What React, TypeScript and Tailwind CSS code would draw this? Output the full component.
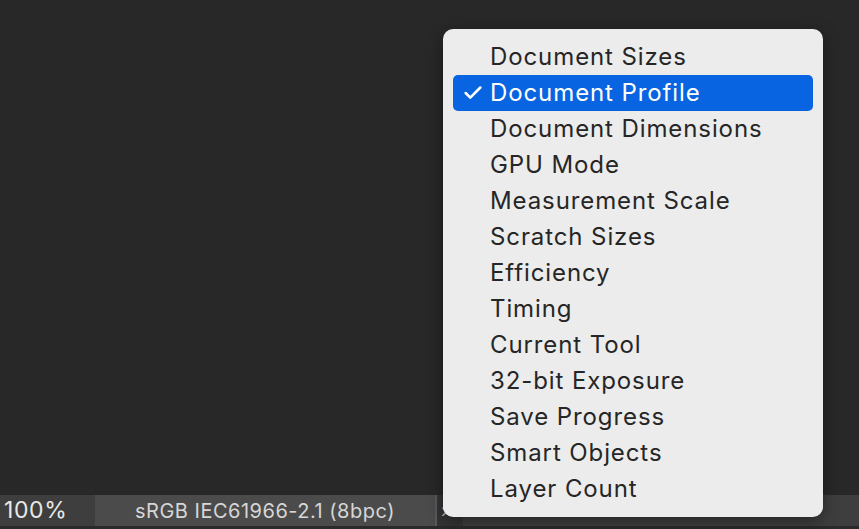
import { Check } from 'lucide-react';

const items = [
  'Document Sizes',
  'Document Profile',
  'Document Dimensions',
  'GPU Mode',
  'Measurement Scale',
  'Scratch Sizes',
  'Efficiency',
  'Timing',
  'Current Tool',
  '32-bit Exposure',
  'Save Progress',
  'Smart Objects',
  'Layer Count',
];

export default function App() {
  return (
    <div
      className="relative w-[859px] h-[529px] bg-[#282828] overflow-hidden flex flex-col"
      style={{ fontFamily: 'Inter, "Helvetica Neue", Arial, sans-serif' }}
    >
      <div className="flex-1" />
      {/* status bar */}
      <div className="h-[31px] bg-[#3e3e3e] flex items-stretch">
        <div className="w-[95px] pl-[4px] flex items-center text-[23px] tracking-[0.6px] text-[#e8e8e8]">100%</div>
        <div className="w-[340px] bg-[#4b4b4b] flex items-center justify-center text-[20px] tracking-[0.5px] text-[#d6d6d6]">
          sRGB IEC61966-2.1 (8bpc)
        </div>
        <div className="w-[2px] bg-[#5a5a5a]" />
        <div className="w-[26px] bg-[#343434] flex items-end pl-[4px] pb-[2px] text-[18px] text-[#bbbbbb]">›</div>
        <div className="flex-1" />
      </div>
      <div className="h-[3px] bg-[#2a2a2a]" />

      {/* dropdown menu */}
      <div className="absolute left-[443px] top-[29px] w-[380px] h-[488px] rounded-[10px] bg-[#ececec] shadow-[0_4px_16px_rgba(0,0,0,0.4)] pt-[10px] pb-[8px] px-[10px]">
        {items.map((label, i) => {
          const selected = i === 1;
          return (
            <div
              key={label}
              className={`h-[36px] flex items-center rounded-[5px] ${selected ? 'bg-[#0864e0] text-white' : 'text-[#262626]'}`}
            >
              <div className="w-[37px] flex items-center justify-center pl-[2px]">
                {selected && <Check className="w-[22px] h-[22px]" strokeWidth={2.8} />}
              </div>
              <span className="text-[24px] tracking-[0.9px]">{label}</span>
            </div>
          );
        })}
      </div>
    </div>
  );
}
